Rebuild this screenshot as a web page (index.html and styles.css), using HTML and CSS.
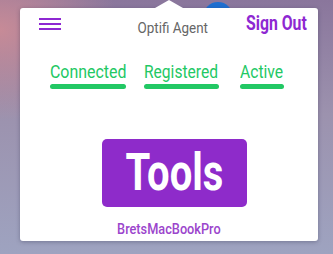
FILE: index.html
```html
<!DOCTYPE html>
<html>
<head>
<meta charset="utf-8">
<link rel="stylesheet" href="styles.css">
</head>
<body>
<div class="desktop">
  <div class="blob"></div>
  <div class="popover">
    <div class="arrow"></div>
    <div class="header">
      <div class="menu" aria-label="menu"><span></span><span></span><span></span></div>
      <div class="title">Optifi Agent</div>
      <div class="signout"><span>Sign Out</span></div>
    </div>
    <div class="statuses">
      <div class="status s1"><span class="label">Connected</span><span class="bar"></span></div>
      <div class="status s2"><span class="label">Registered</span><span class="bar"></span></div>
      <div class="status s3"><span class="label">Active</span><span class="bar"></span></div>
    </div>
    <div class="tools-wrap">
      <div class="tools"><span>Tools</span></div>
    </div>
    <div class="machine"><span>BretsMacBookPro</span></div>
  </div>
</div>
</body>
</html>
```
FILE: styles.css
```css
html, body {
  margin: 0;
  padding: 0;
}
body {
  width: 333px;
  height: 254px;
  overflow: hidden;
  font-family: Roboto, "Liberation Sans", sans-serif;
}
.desktop {
  position: relative;
  width: 333px;
  height: 254px;
  padding: 8px 0 0 20px;
  box-sizing: border-box;
  background:
    radial-gradient(ellipse 120px 90px at 0px 30px, rgba(205,140,150,0.9), rgba(205,140,150,0) 100%),
    linear-gradient(180deg, #8a769c 0%, #9c92ae 45%, #9ea3c0 100%);
}
.blob {
  position: absolute;
  left: 203px;
  top: 2px;
  width: 30px;
  height: 30px;
  border-radius: 50%;
  background: #1f6fd0;
}
.popover {
  position: relative;
  width: 298px;
  height: 233px;
  background: #fff;
  border-radius: 3px;
  box-shadow: 0 1px 4px rgba(40,40,70,0.35);
  display: flex;
  flex-direction: column;
}
.arrow {
  position: absolute;
  left: 135px;
  top: -8px;
  width: 0;
  height: 0;
  border-left: 14px solid transparent;
  border-right: 14px solid transparent;
  border-bottom: 8px solid #fff;
}
.header {
  display: grid;
  grid-template-columns: 1fr auto 1fr;
  align-items: start;
  padding: 0 12px 0 19px;
  height: 40px;
}
.menu {
  display: flex;
  flex-direction: column;
  gap: 3px;
  margin-top: 10px;
  width: 22px;
}
.menu span {
  display: block;
  height: 2px;
  background: #8e28d2;
}
.title {
  margin-top: 10px;
  font-size: 14px;
  color: #666;
  line-height: 20px;
  transform: scaleX(0.96);
}
.signout {
  justify-self: end;
  width: 60px;
  margin-top: 2px;
  font-size: 20px;
  font-weight: 700;
  color: #8e28d2;
  line-height: 26px;
  white-space: nowrap;
}
.signout span {
  display: inline-block;
  transform: scaleX(0.79);
  transform-origin: left center;
}
.statuses {
  display: flex;
  padding-left: 30px;
  margin-top: 13px;
}
.status {
  display: flex;
  flex-direction: column;
  white-space: nowrap;
}
.label {
  display: inline-block;
  font-size: 18px;
  color: #22c864;
  line-height: 22px;
  transform-origin: left center;
}
.bar {
  display: block;
  height: 5px;
  margin-top: 1px;
  border-radius: 3px;
  background: #22c864;
}
.s1 { width: 76px; }
.s1 .label { transform: scaleX(0.885); }
.s2 { width: 75px; margin-left: 18px; }
.s2 .label { transform: scaleX(0.865); }
.s3 { width: 44px; margin-left: 21px; }
.s3 .label { transform: scaleX(0.87); }
.tools-wrap {
  display: flex;
  justify-content: center;
  margin-top: 50px;
  padding-left: 11px;
}
.tools {
  width: 145px;
  height: 68px;
  background: #8e2bca;
  border-radius: 5px;
  display: flex;
  align-items: center;
  justify-content: center;
}
.tools span {
  display: inline-block;
  color: #fff;
  font-size: 52px;
  font-weight: 700;
  line-height: 60px;
  transform: scaleX(0.77);
}
.machine {
  text-align: center;
  margin-top: 14px;
  font-size: 14px;
  font-weight: 500;
  color: #9b45cc;
}
.machine span {
  display: inline-block;
  transform: scaleX(0.91);
}
```
